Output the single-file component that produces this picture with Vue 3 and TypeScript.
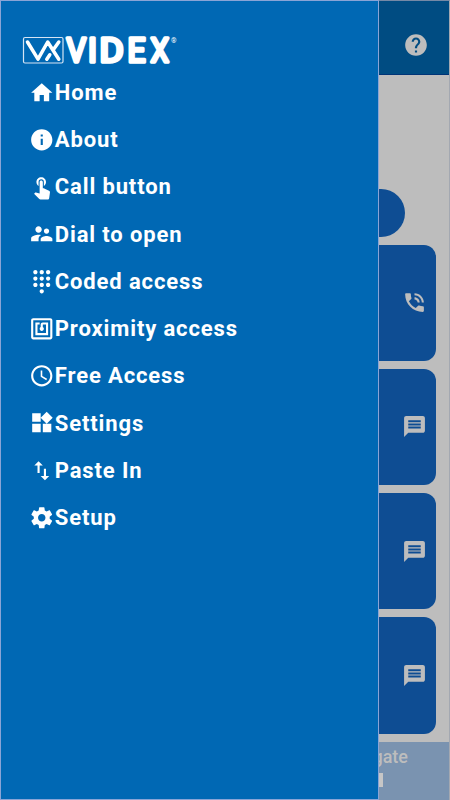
<script setup lang="ts">
interface MenuItem {
  label: string
  icon: string
}

const menu: MenuItem[] = [
  { label: 'Home', icon: 'M10 20v-6h4v6h5v-8h3L12 3 2 12h3v8z' },
  { label: 'About', icon: 'M12 2C6.48 2 2 6.48 2 12s4.48 10 10 10 10-4.48 10-10S17.52 2 12 2zm1 15h-2v-6h2v6zm0-8h-2V7h2v2z' },
  { label: 'Call button', icon: 'M9 11.24V7.5a2.5 2.5 0 0 1 5 0v3.74c1.21-.81 2-2.18 2-3.74C16 5.01 13.99 3 11.5 3S7 5.01 7 7.5c0 1.56.79 2.93 2 3.74zm9.84 4.63l-4.54-2.26c-.17-.07-.35-.11-.54-.11H13v-6c0-.83-.67-1.5-1.5-1.5S10 6.67 10 7.5v10.74l-3.43-.72c-.08-.01-.15-.03-.24-.03-.31 0-.59.13-.79.33l-.79.8 4.94 4.94c.27.27.65.44 1.06.44h6.79c.75 0 1.33-.55 1.44-1.28l.75-5.27c.01-.07.02-.14.02-.2 0-.62-.38-1.16-.91-1.38z' },
  { label: 'Dial to open', icon: 'M16.5 12c1.38 0 2.49-1.12 2.49-2.5S17.88 7 16.5 7C15.12 7 14 8.12 14 9.5s1.12 2.5 2.5 2.5zM9 11c1.66 0 2.99-1.34 2.99-3S10.66 5 9 5C7.34 5 6 6.34 6 8s1.34 3 3 3zm7.5 3c-1.83 0-5.5.92-5.5 2.75V19h11v-2.25c0-1.83-3.67-2.75-5.5-2.75zM9 13c-2.33 0-7 1.17-7 3.5V19h7v-2.25c0-.85.33-2.34 2.37-3.47C10.5 13.1 9.66 13 9 13z' },
  { label: 'Coded access', icon: 'M12 19c-1.1 0-2 .9-2 2s.9 2 2 2 2-.9 2-2-.9-2-2-2zM6 1c-1.1 0-2 .9-2 2s.9 2 2 2 2-.9 2-2-.9-2-2-2zm0 6c-1.1 0-2 .9-2 2s.9 2 2 2 2-.9 2-2-.9-2-2-2zm0 6c-1.1 0-2 .9-2 2s.9 2 2 2 2-.9 2-2-.9-2-2-2zm12-8c1.1 0 2-.9 2-2s-.9-2-2-2-2 .9-2 2 .9 2 2 2zm-6 8c-1.1 0-2 .9-2 2s.9 2 2 2 2-.9 2-2-.9-2-2-2zm6 0c-1.1 0-2 .9-2 2s.9 2 2 2 2-.9 2-2-.9-2-2-2zm0-6c-1.1 0-2 .9-2 2s.9 2 2 2 2-.9 2-2-.9-2-2-2zm-6 0c-1.1 0-2 .9-2 2s.9 2 2 2 2-.9 2-2-.9-2-2-2zm0-6c-1.1 0-2 .9-2 2s.9 2 2 2 2-.9 2-2-.9-2-2-2z' },
  { label: 'Proximity access', icon: 'M20 2H4c-1.1 0-2 .9-2 2v16c0 1.1.9 2 2 2h16c1.1 0 2-.9 2-2V4c0-1.1-.9-2-2-2zm0 18H4V4h16v16zM18 6h-5c-1.1 0-2 .9-2 2v2.28c-.6.35-1 .98-1 1.72 0 1.1.9 2 2 2s2-.9 2-2c0-.74-.4-1.38-1-1.72V8h3v8H8V8h2V6H6v12h12V6z' },
  { label: 'Free Access', icon: 'M11.99 2C6.47 2 2 6.48 2 12s4.47 10 9.99 10C17.52 22 22 17.52 22 12S17.52 2 11.99 2zM12 20c-4.42 0-8-3.58-8-8s3.58-8 8-8 8 3.58 8 8-3.58 8-8 8zM12.5 7H11v6l5.25 3.15.75-1.23-4.5-2.67z' },
  { label: 'Settings', icon: 'M13 13v8h8v-8h-8zM3 21h8v-8H3v8zM3 3v8h8V3H3zm13.66-1.31L11 7.34 16.66 13l5.66-5.66-5.66-5.65z' },
  { label: 'Paste In', icon: 'M16 17.01V10h-2v7.01h-3L15 21l4-3.99h-3zM9 3L5 6.99h3V14h2V6.99h3L9 3z' },
  { label: 'Setup', icon: 'M19.43 12.98c.04-.32.07-.64.07-.98s-.03-.66-.07-.98l2.11-1.65c.19-.15.24-.42.12-.64l-2-3.46c-.12-.22-.39-.3-.61-.22l-2.49 1c-.52-.4-1.08-.73-1.69-.98l-.38-2.65C14.46 2.18 14.25 2 14 2h-4c-.25 0-.46.18-.49.42l-.38 2.65c-.61.25-1.17.59-1.69.98l-2.49-1c-.23-.09-.49 0-.61.22l-2 3.46c-.13.22-.07.49.12.64l2.11 1.65c-.04.32-.07.65-.07.98s.03.66.07.98l-2.11 1.65c-.19.15-.24.42-.12.64l2 3.46c.12.22.39.3.61.22l2.49-1c.52.4 1.08.73 1.69.98l.38 2.65c.03.24.24.42.49.42h4c.25 0 .46-.18.49-.42l.38-2.65c.61-.25 1.17-.59 1.69-.98l2.49 1c.23.09.49 0 .61-.22l2-3.46c.12-.22.07-.49-.12-.64l-2.11-1.65zM12 15.5c-1.93 0-3.5-1.57-3.5-3.5s1.57-3.5 3.5-3.5 3.5 1.57 3.5 3.5-1.57 3.5-3.5 3.5z' },
]

const message = 'M20 2H4c-1.1 0-2 .9-2 2v18l4-4h14c1.1 0 2-.9 2-2V4c0-1.1-.9-2-2-2zm-2 12H6v-2h12v2zm0-3H6V9h12v2zm0-3H6V6h12v2z'
const phone = 'M20 15.5c-1.25 0-2.45-.2-3.57-.57-.35-.11-.74-.03-1.02.24l-2.2 2.2c-2.83-1.44-5.15-3.75-6.59-6.59l2.2-2.21c.28-.26.36-.65.25-1C8.7 6.45 8.5 5.25 8.5 4c0-.55-.45-1-1-1H4c-.55 0-1 .45-1 1 0 9.39 7.61 17 17 17 .55 0 1-.45 1-1v-3.5c0-.55-.45-1-1-1zM19 12h2c0-4.97-4.03-9-9-9v2c3.87 0 7 3.13 7 7zm-4 0h2c0-2.76-2.24-5-5-5v2c1.66 0 3 1.34 3 3z'
const cards: string[] = [phone, message, message, message]
</script>

<template>
  <div class="screen">
    <div class="page">
      <header class="topbar">
        <svg class="help" viewBox="0 0 24 24"><path d="M12 2C6.48 2 2 6.48 2 12s4.48 10 10 10 10-4.48 10-10S17.52 2 12 2zm1 17h-2v-2h2v2zm2.07-7.75l-.9.92C13.45 12.9 13 13.5 13 15h-2v-.5c0-1.1.45-2.1 1.17-2.83l1.24-1.26c.37-.36.59-.86.59-1.41 0-1.1-.9-2-2-2s-2 .9-2 2H8c0-2.21 1.79-4 4-4s4 1.79 4 4c0 .88-.36 1.68-.93 2.25z" /></svg>
      </header>
      <main class="content">
        <div class="pill"></div>
        <div v-for="(icon, i) in cards" :key="i" class="card">
          <svg class="card-icon" viewBox="0 0 24 24"><path :d="icon" /></svg>
        </div>
      </main>
      <footer class="banner">
        <div class="banner-title">gate</div>
        <div class="banner-bar"></div>
      </footer>
    </div>

    <nav class="drawer">
      <svg class="logo" viewBox="0 -6 160 44">
        <rect x="1.5" y="3.5" width="39.5" height="25.5" rx="1.5" class="logo-frame" />
        <path class="logo-mark" d="M5.5 8L16 25.2L25.7 8L36.8 25.2M36.8 8L32 14.8M27.8 20.8L24.8 25.2" />
        <g class="logo-word">
          <text x="44.5" y="28.2" textLength="19.5" lengthAdjust="spacingAndGlyphs">V</text>
          <text x="66" y="28.2">I</text>
          <text x="77.5" y="28.2" textLength="24.2" lengthAdjust="spacingAndGlyphs">D</text>
          <text x="105.4" y="28.2" textLength="18" lengthAdjust="spacingAndGlyphs">E</text>
          <text x="128.6" y="28.2" textLength="18.4" lengthAdjust="spacingAndGlyphs">X</text>
        </g>
        <text x="149" y="8.5" class="logo-reg">®</text>
      </svg>
      <ul class="menu">
        <li v-for="item in menu" :key="item.label" class="menu-item">
          <svg class="menu-icon" viewBox="0 0 24 24"><path :d="item.icon" /></svg>
          <span>{{ item.label }}</span>
        </li>
      </ul>
    </nav>
  </div>
</template>

<style>
body {
  margin: 0;
}
</style>

<style scoped>
.screen {
  position: relative;
  width: 450px;
  height: 800px;
  overflow: hidden;
  font-family: Roboto, sans-serif;
}
.page {
  display: flex;
  flex-direction: column;
  box-sizing: border-box;
  height: 800px;
  border-top: 1px solid #7589a6;
  border-right: 1px solid #a3a8b1;
  background: #bdbdbd;
}
.topbar {
  display: flex;
  box-sizing: border-box;
  flex: none;
  height: 74px;
  padding: 31px 20px 0 0;
  justify-content: flex-end;
  background: #004c82;
  border-bottom: 1px solid #003477;
}
.help {
  width: 26px;
  height: 26px;
  fill: #bdbdbd;
}
.content {
  display: flex;
  flex: 1;
  flex-direction: column;
  padding: 114px 13px 0 14px;
}
.pill {
  flex: none;
  width: 360px;
  height: 48px;
  margin: 0 0 7.5px 31px;
  border-radius: 24px;
  background: #0e4d93;
}
.card {
  display: flex;
  box-sizing: border-box;
  flex: none;
  height: 116.4px;
  margin-bottom: 7.9px;
  padding-right: 9px;
  align-items: center;
  justify-content: flex-end;
  border-radius: 12px;
  background: #0e4d93;
}
.card-icon {
  width: 25px;
  height: 25px;
  fill: #bdbdbd;
}
.banner {
  box-sizing: border-box;
  flex: none;
  height: 58px;
  padding: 4px 41px 0 0;
  background: #7a93b0;
  color: #bdbdbd;
  text-align: right;
}
.banner-title {
  font-size: 18px;
  font-weight: 500;
  line-height: 21px;
}
.banner-bar {
  width: 4px;
  height: 14px;
  margin: 6px 25px 0 auto;
  background: #c6c6c6;
}
.drawer {
  position: absolute;
  top: 0;
  left: 0;
  box-sizing: border-box;
  width: 379px;
  height: 800px;
  padding: 27px 0 0 21px;
  border: 1px solid #8aa4d6;
  background: #0068b4;
}
.logo {
  display: block;
  width: 160px;
  height: 44px;
}
.logo-frame {
  fill: none;
  stroke: #d5e4f4;
  stroke-width: 1.2;
}
.logo-mark {
  fill: none;
  stroke: #fff;
  stroke-width: 3.5;
  stroke-linecap: round;
  stroke-linejoin: round;
}
.logo-word {
  fill: #fff;
  stroke: #fff;
  stroke-width: 3.4;
  stroke-linejoin: round;
  font-size: 32.6px;
  font-weight: 400;
}
.logo-reg {
  fill: #fff;
  font-size: 7px;
}
.menu {
  margin: -3.2px 0 0;
  padding: 0 0 0 6.5px;
  list-style: none;
}
.menu-item {
  display: flex;
  height: 47.25px;
  align-items: center;
  gap: 0.8px;
  color: #fff;
  font-size: 22px;
  font-weight: 700;
  letter-spacing: 0.87px;
  white-space: nowrap;
}
.menu-icon {
  width: 25.5px;
  height: 25.5px;
  flex: none;
  fill: #fff;
}
</style>
